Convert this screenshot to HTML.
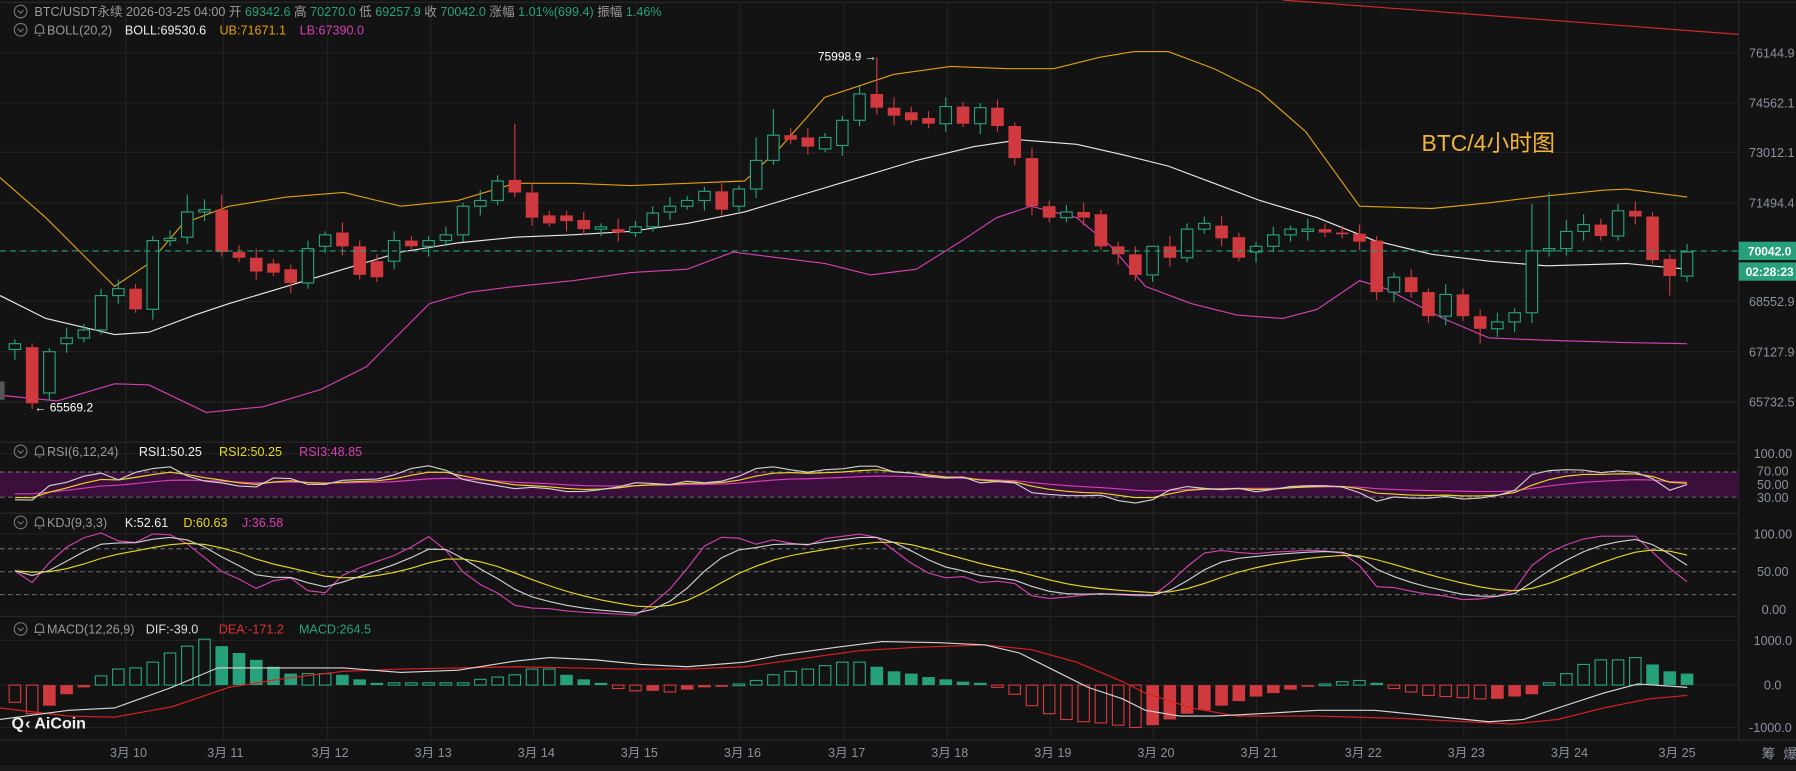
<!DOCTYPE html>
<html><head><meta charset="utf-8">
<style>
html,body{margin:0;padding:0;background:#131313;overflow:hidden}
svg{display:block}
text{font-family:"Liberation Sans","Noto Sans CJK SC",sans-serif}
</style></head>
<body>
<svg id="s" width="1796" height="771" viewBox="0 0 1568 673" preserveAspectRatio="none" xmlns="http://www.w3.org/2000/svg">
<rect x="0" y="0" width="1568" height="673" fill="#131313"/>
<g id="grid" stroke="#222" stroke-width="1"></g>
<g stroke="#2a2a2a" stroke-width="1">
<line x1="0" y1="386" x2="1518" y2="386"/>
<line x1="0" y1="448" x2="1518" y2="448"/>
<line x1="0" y1="538" x2="1518" y2="538"/>
<line x1="0" y1="646" x2="1568" y2="646"/>
<line x1="1518" y1="0" x2="1518" y2="646"/>
<line x1="0" y1="2" x2="1568" y2="2"/>
</g>
<rect x="0" y="412" width="1518" height="22" fill="#3a0f3c"/>
<g stroke="#666" stroke-dasharray="4,3" stroke-width="1">
<line x1="0" y1="412" x2="1518" y2="412"/>
<line x1="0" y1="434" x2="1518" y2="434"/>
<line x1="0" y1="479" x2="1518" y2="479"/>
<line x1="0" y1="499" x2="1518" y2="499"/>
<line x1="0" y1="519" x2="1518" y2="519"/>
</g>
<line x1="1120" y1="0" x2="1518" y2="30" stroke="#d02a2a" stroke-width="1"/>
<polyline fill="none" stroke="#e0a00e" stroke-width="1" points="0,155 40,190 100,250 130,230 160,195 200,180 250,172 300,168 350,180 400,175 450,160 500,160 550,162 600,160 650,158 680,130 720,85 780,65 830,58 880,60 920,60 960,50 990,45 1020,45 1060,60 1100,80 1140,115 1187,180 1250,182 1300,177 1350,171 1400,166 1420,165 1473,172"/>
<polyline fill="none" stroke="#e8e8e8" stroke-width="1" points="0,258 40,278 100,292 130,290 170,275 200,265 250,250 300,235 350,220 400,212 450,207 500,205 550,202 600,195 650,185 700,170 750,155 800,140 850,128 890,122 940,126 980,135 1020,145 1060,160 1100,175 1150,190 1200,210 1250,222 1300,228 1350,232 1420,230 1473,235"/>
<polyline fill="none" stroke="#d63fb5" stroke-width="1" points="0,345 50,350 100,335 130,336 180,360 230,355 280,340 320,320 350,290 375,265 410,255 450,250 500,245 550,238 600,235 640,220 680,225 720,230 760,240 800,235 840,210 870,190 900,180 940,190 970,215 1000,250 1040,265 1080,275 1120,278 1150,270 1187,245 1210,252 1260,278 1300,295 1350,297 1420,299 1473,300"/>
<g id="candles"></g>
<line x1="0" y1="219" x2="1518" y2="219" stroke="#26a17b" stroke-dasharray="5,4" stroke-width="1"/>
<line x1="1518" y1="219" x2="1524" y2="219" stroke="#fff" stroke-width="1.5"/>
<rect x="1518" y="211" width="50" height="16" fill="#26a17b"/>
<text x="1526" y="223" font-size="10.5" fill="#fff" font-weight="bold">70042.0</text>
<rect x="1518" y="229" width="50" height="16" fill="#26a17b"/>
<text x="1524" y="241" font-size="10.5" fill="#fff" font-weight="bold">02:28:23</text>
<text x="714" y="53" font-size="10.5" fill="#fff">75998.9 →</text>
<text x="30" y="359" font-size="10.5" fill="#fff">← 65569.2</text>
<text x="1241" y="132" font-size="20" fill="#f2b33a">BTC/4小时图</text>
<g font-size="11" fill="#8b929e">
<text x="1527" y="50">76144.9</text>
<text x="1527" y="94">74562.1</text>
<text x="1527" y="137">73012.1</text>
<text x="1527" y="181">71494.4</text>
<text x="1527" y="267">68552.9</text>
<text x="1527" y="311">67127.9</text>
<text x="1527" y="355">65732.5</text>
<text x="1531" y="400">100.00</text>
<text x="1534" y="415">70.00</text>
<text x="1534" y="427">50.00</text>
<text x="1534" y="438">30.00</text>
<text x="1531" y="470">100.00</text>
<text x="1534" y="503">50.00</text>
<text x="1538" y="536">0.00</text>
<text x="1531" y="563">1000.0</text>
<text x="1540" y="602">0.0</text>
<text x="1527" y="639">-1000.0</text>
</g>
<g id="ind"></g>
<g font-size="11" fill="#8b929e" id="xl"></g>
<text x="1538" y="662" font-size="12" fill="#8b929e">筹</text>
<text x="1557" y="662" font-size="12" fill="#8b929e">爆</text>
<rect x="0" y="668" width="1568" height="5" fill="#1a1a1a"/>
<g font-size="11">
<circle cx="18" cy="10" r="5.5" fill="none" stroke="#777"/>
<polyline points="15.5,9 18,11.5 20.5,9" fill="none" stroke="#777"/>
<text x="30" y="14" fill="#9a9a9a">BTC/USDT永续  2026-03-25 04:00  开 <tspan fill="#26a17b">69342.6</tspan> 高 <tspan fill="#26a17b">70270.0</tspan> 低 <tspan fill="#26a17b">69257.9</tspan> 收 <tspan fill="#26a17b">70042.0</tspan> 涨幅 <tspan fill="#26a17b">1.01%(699.4)</tspan> 振幅 <tspan fill="#26a17b">1.46%</tspan></text>
</g>
<g font-size="11" id="labs"></g>
<text x="10" y="636" font-size="14" font-weight="bold" fill="#eee">Q</text>
<text x="22" y="636" font-size="14" font-weight="bold" fill="#eee">‹ AiCoin</text>
<rect x="0" y="333" width="4" height="16" fill="#555"/>
</svg>
<script>
const NS="http://www.w3.org/2000/svg";
function el(p,t,a){const e=document.createElementNS(NS,t);for(const k in a)e.setAttribute(k,a[k]);p.appendChild(e);return e;}
const grid=document.getElementById('grid');
const days=[110,195,286,376,466,556,646,737,827,917,1007,1097,1188,1278,1368,1462];
days.forEach(x=>el(grid,'line',{x1:x,y1:3,x2:x,y2:646}));
[46,90,133,177,219,263,307,351,396,466,559,598,635].forEach(y=>el(grid,'line',{x1:0,y1:y,x2:1518,y2:y}));
const xl=document.getElementById('xl');
days.forEach((x,i)=>{const t=el(xl,'text',{x:x-14,y:661});t.textContent='3月 '+(10+i);});
const labs=document.getElementById('labs');
function lab(y,name,parts){
 el(labs,'circle',{cx:18,cy:y-4,r:5.5,fill:'none',stroke:'#777'});
 el(labs,'polyline',{points:`15.5,${y-5} 18,${y-2.5} 20.5,${y-5}`,fill:'none',stroke:'#777'});
 el(labs,'path',{d:`M30,${y-1} h9 M31,${y-1} v-4 a3.5,3.5 0 0 1 7,0 v4 M33.5,${y+1} h2`,fill:'none',stroke:'#888'});
 const t=el(labs,'text',{x:41,y:y,fill:'#9a9a9a'});t.textContent=name;
 let x=41+name.length*6.1+7;
 parts.forEach(p=>{const s=el(labs,'text',{x:x,y:y,fill:p[1]});s.textContent=p[0];x+=p[0].length*6.3+7;});
}
lab(30,'BOLL(20,2)',[['BOLL:69530.6','#eee'],['UB:71671.1','#e0a00e'],['LB:67390.0','#d63fb5']]);
lab(398,'RSI(6,12,24)',[['RSI1:50.25','#eee'],['RSI2:50.25','#e8d820'],['RSI3:48.85','#d63fb5']]);
lab(460,'KDJ(9,3,3)',[['K:52.61','#eee'],['D:60.63','#e8d820'],['J:36.58','#d63fb5']]);
lab(553,'MACD(12,26,9)',[['DIF:-39.0','#ddd'],['DEA:-171.2','#e03030'],['MACD:264.5','#26a17b']]);
const C=[[305,300],[303,352],[343,307],[300,295],[295,288],[288,258],[258,252],[252,270],[270,210],[210,208],[207,185],[185,183],[183,220],[220,225],[225,237],[230,238],[235,247],[247,217],[215,205],[203,215],[215,240],[228,242],[228,210],[210,215],[215,210],[210,205],[205,180],[180,175],[175,158],[157,168],[168,190],[188,195],[188,193],[192,200],[200,198],[200,203],[203,198],[198,186],[185,180],[180,175],[175,167],[167,183],[180,165],[165,140],[140,118],[118,122],[120,128],[130,120],[127,105],[105,82],[82,94],[94,101],[98,105],[103,108],[108,93],[93,108],[108,94],[94,110],[110,138],[138,180],[180,190],[190,185],[185,190],[187,215],[215,222],[222,240],[240,215],[215,225],[225,200],[200,195],[197,208],[207,225],[220,215],[215,205],[205,200],[202,200],[200,203],[203,204],[204,211],[210,255],[255,242],[242,255],[255,276],[276,257],[257,276],[276,287],[287,281],[281,273],[273,219],[219,217],[217,202],[202,196],[196,206],[206,184],[184,189],[189,227],[226,241],[241,220]];
const hiO={29:108,50:50,88:178,89:168,90:192,44:95,43:120,1:300,12:170,10:170,66:232,63:183};
const loO={1:357,50:100,96:258,88:282,79:262,85:300,87:290};
const W=[4,7,3,9,5,6,8,4];
const cg=document.getElementById('candles');
const X=i=>13+i*15.05;
C.forEach((c,i)=>{
 const [o,cl]=c,x=X(i),up=cl<o,col=up?'#26a17b':'#d0393e';
 const top=Math.min(o,cl),bot=Math.max(o,cl);
 const hi=hiO[i]!==undefined?hiO[i]:top-W[i%8];
 const lo=loO[i]!==undefined?loO[i]:bot+W[(i+3)%8];
 el(cg,'line',{x1:x,y1:hi,x2:x,y2:top,stroke:col});
 el(cg,'line',{x1:x,y1:bot,x2:x,y2:lo,stroke:col});
 const h=Math.max(bot-top,1.5);
 if(up)el(cg,'rect',{x:x-5,y:top,width:10,height:h,fill:'#131313',stroke:col,'stroke-width':1});
 else el(cg,'rect',{x:x-5.5,y:top,width:11,height:h,fill:col});
});
const ind=document.getElementById('ind');
function interp(pts,x){for(let k=0;k<pts.length-1;k++){if(x>=pts[k][0]&&x<=pts[k+1][0]){const t=(x-pts[k][0])/(pts[k+1][0]-pts[k][0]);return pts[k][1]+t*(pts[k+1][1]-pts[k][1]);}}return x<pts[0][0]?pts[0][1]:pts[pts.length-1][1];}
function line(arr,col){el(ind,'polyline',{points:arr.map(p=>p[0].toFixed(1)+','+p[1].toFixed(1)).join(' '),fill:'none',stroke:col,'stroke-width':1});}
const rsiW=[[2,433],[25,440],[38,425],[52,422],[64,420],[79,413],[90,413],[103,419],[116,413],[130,409],[143,409],[154,406],[167,419],[180,420],[198,422],[221,427],[233,418],[247,416],[259,419],[274,425],[288,422],[300,419],[338,418],[352,410],[378,406],[393,412],[407,420],[431,423],[445,427],[470,425],[500,430],[520,428],[540,425],[560,420],[580,424],[600,420],[620,422],[640,418],[660,409],[680,407],[700,413],[720,410],[740,409],[760,405],[780,412],[800,413],[820,418],[840,416],[860,423],[880,418],[900,430],[920,432],[940,433],[960,432],[980,438],[1000,440],[1020,428],[1040,424],[1060,428],[1080,426],[1100,430],[1120,425],[1140,424],[1160,424],[1180,426],[1200,438],[1220,433],[1240,436],[1260,433],[1280,436],[1300,434],[1320,430],[1340,412],[1360,410],[1380,410],[1400,413],[1420,410],[1440,416],[1458,428],[1473,423]];
const xs=C.map((c,i)=>X(i));
const rw=xs.map(x=>[x,interp(rsiW,x)]);
let e1=rw[0][1],e2=rw[0][1];const ry=[],rm=[];
rw.forEach(p=>{e1=e1*0.55+p[1]*0.45;e2=e2*0.8+p[1]*0.2;ry.push([p[0],e1*0.85+423*0.15]);rm.push([p[0],e2*0.6+423*0.4]);});
line(rm,'#d63fb5');line(ry,'#e8d820');line(rw,'#cfcfcf');
const J=[[2,498],[11,496],[25,512],[51,482],[64,474],[76,468],[89,465],[103,472],[116,475],[130,466],[154,467],[175,484],[195,500],[210,506],[221,515],[233,509],[247,504],[259,505],[272,519],[287,517],[300,501],[326,491],[340,487],[364,475],[378,466],[404,499],[416,509],[431,515],[445,526],[456,532],[470,530],[500,534],[540,536],[555,537],[580,520],[605,490],[620,470],[640,468],[660,475],[680,470],[700,478],[720,470],[760,465],[780,480],[800,495],[820,505],[840,503],[860,510],[880,505],[900,520],[920,523],[940,520],[960,518],[990,520],[1010,520],[1030,500],[1050,483],[1070,480],[1090,484],[1110,482],[1150,480],[1180,484],[1200,512],[1220,513],[1240,518],[1260,520],[1280,524],[1300,522],[1320,518],[1340,490],[1360,478],[1390,468],[1410,468],[1430,468],[1450,490],[1473,508]];
const jj=xs.map(x=>[x,interp(J,x)]);
let k=jj[0][1],d=jj[0][1];const kk=[],dd=[];
jj.forEach(p=>{k=k*0.6+p[1]*0.4;d=d*0.72+k*0.28;kk.push([p[0],k]);dd.push([p[0],d]);});
line(jj,'#d63fb5');line(dd,'#e8d820');line(kk,'#cfcfcf');
const M=[-15,-25,-18,-8,-2,8,14,15,20,28,34,40,34,28,22,16,10,10,10,9,5,2,2,2,2,2,2,5,7,9,14,14,9,5,2,-3,-5,-5,-6,-4,-2,-1,1,4,9,12,14,17,20,20,16,12,10,7,5,3,2,-2,-8,-18,-25,-30,-32,-33,-35,-37,-35,-30,-25,-22,-18,-14,-10,-7,-4,-1,1,3,4,2,-3,-6,-9,-10,-11,-12,-12,-10,-8,2,10,18,22,22,24,18,12,10];
M.forEach((v,i)=>{
 const x=X(i),prev=i?M[i-1]:0,g=v>=0,col=g?'#26a17b':'#d0393e';
 const hollow=g?(v>=prev):(v<prev);
 const y=g?598-v:598,h=Math.max(Math.abs(v),1.5);
 if(hollow)el(ind,'rect',{x:x-5,y:y,width:10,height:h,fill:'none',stroke:col});
 else el(ind,'rect',{x:x-5.5,y:y,width:11,height:h,fill:col});
});
const DIF=[[0,628],[60,620],[100,618],[150,600],[190,583],[240,583],[300,583],[350,587],[400,585],[450,577],[480,574],[520,576],[560,580],[600,582],[650,578],[680,572],[730,565],[770,560],[820,561],[860,563],[890,570],[920,585],[950,600],[980,610],[1000,620],[1030,625],[1060,625],[1100,623],[1150,620],[1200,620],[1250,625],[1300,630],[1330,628],[1360,618],[1400,605],[1430,597],[1473,600]];
const DEA=[[0,618],[60,625],[100,626],[150,617],[200,600],[250,592],[300,586],[350,584],[400,583],[450,582],[500,583],[550,584],[600,584],[650,582],[700,575],[750,568],[800,565],[860,563],[900,567],[940,578],[980,595],[1000,605],[1040,618],[1080,625],[1150,625],[1220,627],[1280,630],[1320,632],[1360,628],[1400,618],[1440,610],[1473,607]];
line(DEA,'#e02020');line(DIF,'#d8d8d8');
</script>
</body></html>
